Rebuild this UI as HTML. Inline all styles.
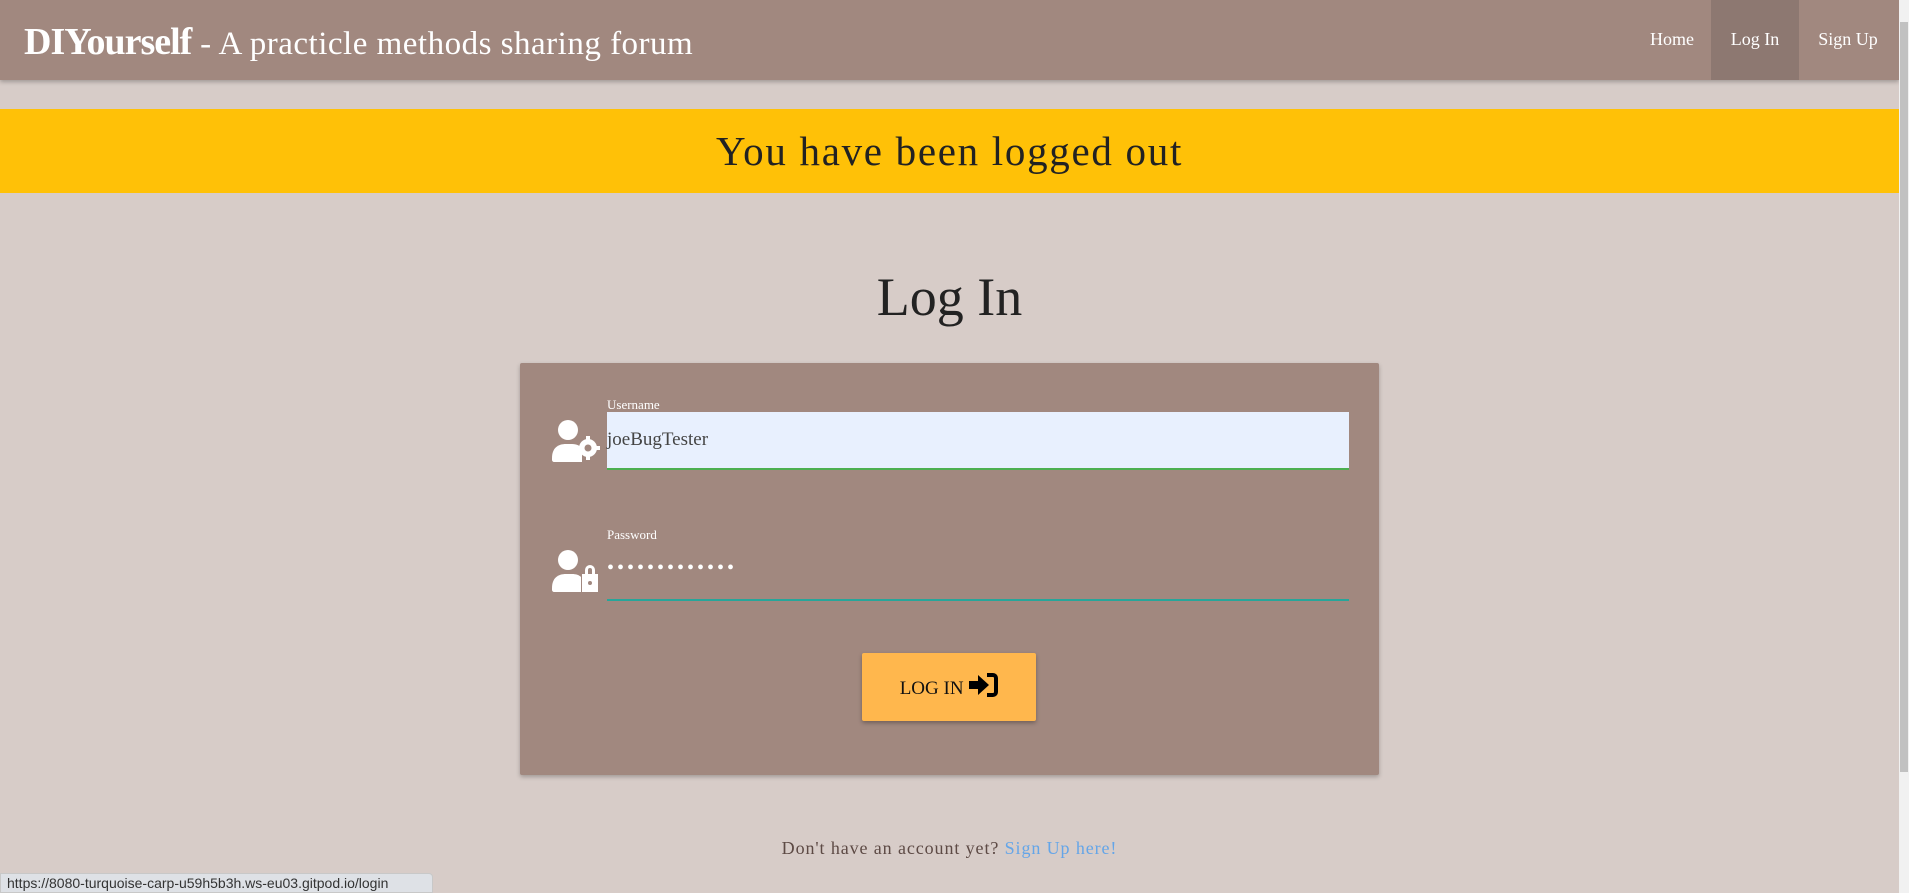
<!DOCTYPE html>
<html><head><meta charset="utf-8"><style>
*{box-sizing:border-box;margin:0;padding:0}
html,body{width:1909px;height:893px;overflow:hidden}
body{background:#d7ccc8;font-family:"Liberation Serif",serif;position:relative}
.nav{position:absolute;left:0;top:0;width:1899px;height:80px;background:#a1887f;box-shadow:0 2px 4px rgba(0,0,0,.25)}
.brand{position:absolute;left:24px;top:20px;color:#fff;font-size:33px;white-space:nowrap;letter-spacing:.5px}
.brand b{font-size:38px;letter-spacing:-1px}
.nav a{position:absolute;top:0;height:80px;line-height:78px;color:#fff;font-size:18px;text-align:center;text-decoration:none}
.sb{position:absolute;right:0;top:0;width:10px;height:893px;background:#f1f1f1}
.sb div{position:absolute;left:1px;top:22px;width:8px;height:750px;background:#c1c1c1}
.banner{position:absolute;left:0;top:109px;width:1899px;height:84px;background:#ffc107;text-align:center;font-size:41px;line-height:84px;color:#222;letter-spacing:1.7px}
h1{position:absolute;left:0;width:1899px;top:266px;text-align:center;font-weight:normal;font-size:54px;color:#222}
.card{position:absolute;left:520px;top:363px;width:859px;height:412px;background:#a1887f;border-radius:2px;box-shadow:0 2px 4px rgba(0,0,0,.25)}
.lbl{position:absolute;left:87px;color:#fff;font-size:13px}
.inp{position:absolute;left:87px;width:742px;height:58px}
.btn{position:absolute;left:342px;top:290px;width:174px;height:68px;background:#ffb74d;border-radius:2px;box-shadow:0 2px 4px rgba(0,0,0,.3);font-size:19px;line-height:72px;text-align:center;color:#111}
.foot{position:absolute;left:0;width:1899px;top:838px;text-align:center;font-size:18px;color:#5d4a45;letter-spacing:.9px}
.foot span{color:#64a5e8}
.status{position:absolute;left:0;top:873px;width:433px;height:20px;background:#dee1e6;border:1px solid #c8c8c8;border-radius:0 4px 0 0;font-family:"Liberation Sans",sans-serif;font-size:14px;line-height:19px;padding-left:6px;color:#333}
</style></head><body>
<div class="nav">
<div class="brand"><b>DIYourself</b> - A practicle methods sharing forum</div>
<a style="left:1632px;width:80px">Home</a>
<a style="left:1711px;width:88px;background:#8d7871">Log In</a>
<a style="left:1802px;width:92px">Sign Up</a>
</div>
<div class="sb"><div></div></div>
<div class="banner">You have been logged out</div>
<h1>Log In</h1>
<div class="card">
<svg style="position:absolute;left:30px;top:57px" width="50" height="42" viewBox="0 0 50 42" fill="#fff">
<circle cx="18" cy="10" r="10"/><path d="M2 38c0-10 6-14 14-14h6c5 0 8 2 10 4v14H4c-1 0-2-1-2-2z"/>
<circle cx="38" cy="28" r="9"/><circle cx="38" cy="28" r="3.5" fill="#a1887f"/>
<path d="M36 16h4v4h-4zM36 36h4v4h-4zM26 26h4v4h-4zM46 26h4v4h-4z"/>
</svg>
<svg style="position:absolute;left:30px;top:187px" width="50" height="42" viewBox="0 0 50 42" fill="#fff">
<circle cx="18" cy="10" r="10"/><path d="M2 38c0-10 6-14 14-14h6c4 0 7 1 9 3v15H4c-1 0-2-1-2-2z"/>
<path d="M32 24h16v18H32z"/><path d="M35 24v-4a5 5 0 0 1 10 0v4h-3v-4a2 2 0 0 0-4 0v4z"/><circle cx="40" cy="33" r="2" fill="#a1887f"/>
</svg>
<div class="lbl" style="top:34px">Username</div>
<div class="inp" style="top:49px;background:#e8f0fe;border-bottom:2px solid #4caf50;font-size:19px;line-height:56px;color:#444">joeBugTester</div>
<div class="lbl" style="top:164px">Password</div>
<div class="inp" style="top:180px;border-bottom:2px solid #26a69a;color:#fff;font-size:20px;line-height:50px;letter-spacing:3px">•••••••••••••</div>
<div class="btn">LOG IN <svg width="30" height="24" viewBox="0 0 30 24" style="vertical-align:-3px"><path d="M1 8h9V2l11 10-11 10v-6H1z" fill="#000"/><path d="M19 2h6a3 3 0 0 1 3 3v14a3 3 0 0 1-3 3h-6" stroke="#000" stroke-width="4" fill="none"/></svg></div>
</div>
<div class="foot">Don't have an account yet? <span>Sign Up here!</span></div>
<div class="status">https://8080-turquoise-carp-u59h5b3h.ws-eu03.gitpod.io/login</div>
</body></html>
